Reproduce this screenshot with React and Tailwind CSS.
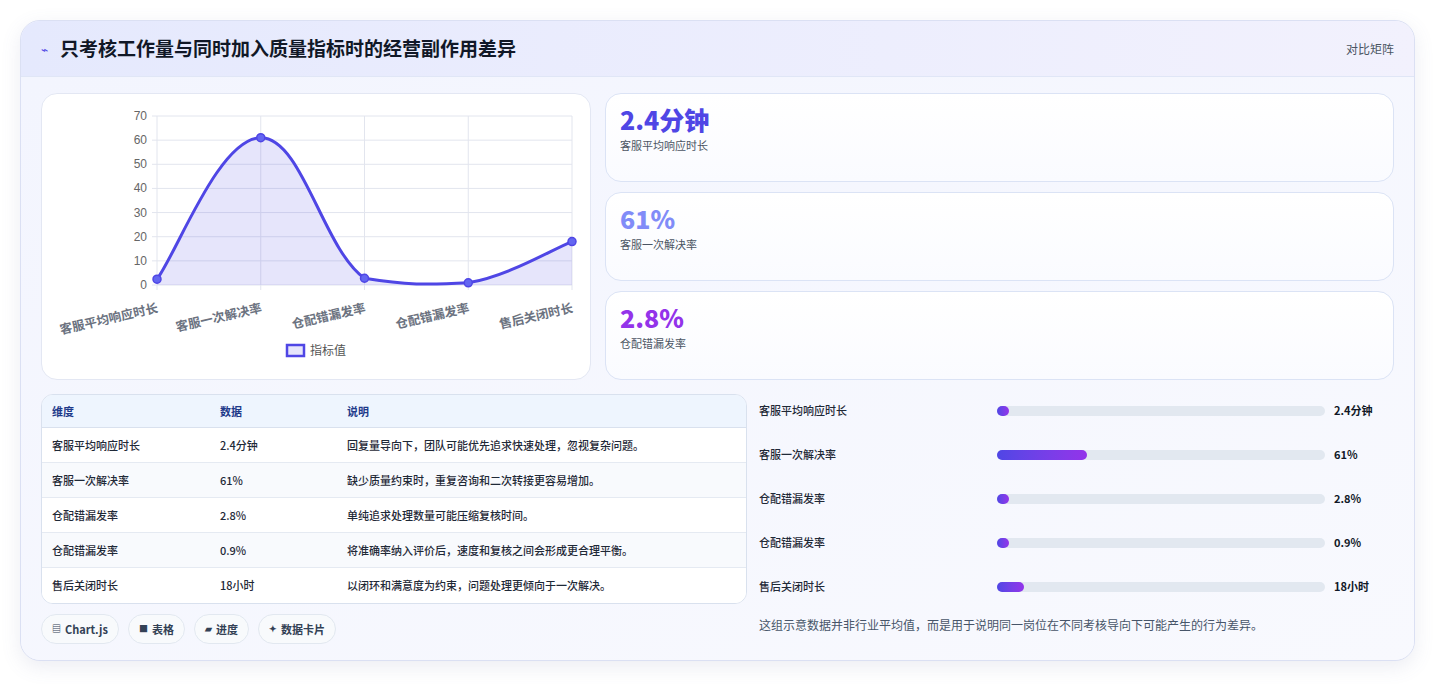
import React from 'react';

const font = { fontFamily: '"Noto Sans CJK SC", "Noto Sans", sans-serif' };

const points = [
  { label: '客服平均响应时长', value: 2.4 },
  { label: '客服一次解决率', value: 61 },
  { label: '仓配错漏发率', value: 2.8 },
  { label: '仓配错漏发率', value: 0.9 },
  { label: '售后关闭时长', value: 18 },
];

const rows = [
  ['客服平均响应时长', '2.4分钟', '回复量导向下，团队可能优先追求快速处理，忽视复杂问题。'],
  ['客服一次解决率', '61%', '缺少质量约束时，重复咨询和二次转接更容易增加。'],
  ['仓配错漏发率', '2.8%', '单纯追求处理数量可能压缩复核时间。'],
  ['仓配错漏发率', '0.9%', '将准确率纳入评价后，速度和复核之间会形成更合理平衡。'],
  ['售后关闭时长', '18小时', '以闭环和满意度为约束，问题处理更倾向于一次解决。'],
];

const bars = [
  { label: '客服平均响应时长', value: '2.4分钟', pct: 3.6 },
  { label: '客服一次解决率', value: '61%', pct: 27.5 },
  { label: '仓配错漏发率', value: '2.8%', pct: 3.6 },
  { label: '仓配错漏发率', value: '0.9%', pct: 3.6 },
  { label: '售后关闭时长', value: '18小时', pct: 8.2 },
];

const X0 = 115, X1 = 530, YT = 22, YB = 191;
const px = (i) => X0 + ((X1 - X0) / 4) * i;
const py = (v) => YB - ((YB - YT) / 70) * v;

function curvePath() {
  const p = points.map((d, i) => [px(i), py(d.value)]);
  let d = `M${p[0][0]},${p[0][1]}`;
  for (let i = 0; i < p.length - 1; i++) {
    const p0 = p[i - 1] || p[i];
    const p1 = p[i];
    const p2 = p[i + 1];
    const p3 = p[i + 2] || p2;
    const t = 0.4 / 2;
    const c1 = [p1[0] + (p2[0] - p0[0]) * t, Math.min(YB, p1[1] + (p2[1] - p0[1]) * t)];
    const c2 = [p2[0] - (p3[0] - p1[0]) * t, Math.min(YB, p2[1] - (p3[1] - p1[1]) * t)];
    d += ` C${c1[0]},${c1[1]} ${c2[0]},${c2[1]} ${p2[0]},${p2[1]}`;
  }
  return d;
}

const LineChart = () => {
  const line = curvePath();
  return (
    <svg width="549" height="285" className="block">
      {[0, 10, 20, 30, 40, 50, 60, 70].map((v) => (
        <g key={v}>
          <line x1={X0 - 5} x2={X1} y1={py(v)} y2={py(v)} stroke="#e2e5ee" />
          <text x={X0 - 10} y={py(v) + 4} textAnchor="end" fontSize="12" fill="#666" fontFamily="Liberation Sans, sans-serif">{v}</text>
        </g>
      ))}
      {points.map((d, i) => (
        <line key={i} x1={px(i)} x2={px(i)} y1={YT} y2={YB + 5} stroke="#e2e5ee" />
      ))}
      <path d={`${line} L${X1},${YB} L${X0},${YB} Z`} fill="rgba(79,70,229,0.14)" />
      <path d={line} fill="none" stroke="#4f46e5" strokeWidth="3" />
      {points.map((d, i) => (
        <circle key={i} cx={px(i)} cy={py(d.value)} r="4" fill="#6366f1" stroke="#4f46e5" strokeWidth="1.5" />
      ))}
      {points.map((d, i) => (
        <text key={i} x={px(i)} y={YB + 27} textAnchor="end" fontSize="12.5" fontWeight="600" fill="#6b7280"
          transform={`rotate(-13 ${px(i)} ${YB + 20})`} style={font}>{d.label}</text>
      ))}
      <rect x="245" y="251" width="17" height="11" fill="rgba(79,70,229,0.14)" stroke="#4f46e5" strokeWidth="2.5" />
      <text x="268" y="261" fontSize="12" fill="#555" style={font}>指标值</text>
    </svg>
  );
};

const StatCard = ({ value, label, color }) => (
  <div className="flex-1 rounded-2xl border border-[#dbe3f5] bg-gradient-to-b from-white to-[#fafbff] px-[14px] pt-[9px]">
    <div className={`text-[25px] font-extrabold leading-[32px] ${color}`}>{value}</div>
    <div className="mt-[2px] text-[11px] text-[#4b5563]">{label}</div>
  </div>
);

const Pill = ({ icon, children }) => (
  <div className="flex h-[30px] items-center gap-1 rounded-full border border-[#e2e8f0] bg-[#f8fafc] px-[10px] text-[11px] font-semibold text-[#334155]">
    <span className="text-[9px]">{icon}</span>
    {children}
  </div>
);

export default function App() {
  return (
    <div className="min-h-[684px] bg-white p-5" style={font}>
      <div className="overflow-hidden rounded-[20px] border border-[#dbe0f3] bg-[#f5f7fe] shadow-[0_6px_20px_rgba(100,110,160,0.12)]">
        <div className="flex h-[56px] items-center justify-between border-b border-[#e0e6f6] bg-gradient-to-r from-[#e5e9fd] to-[#f2f1fd] pl-5 pr-5">
          <div className="flex items-center gap-3">
            <span className="text-[12px] text-[#4f46e5]">⌁</span>
            <h1 className="text-[19px] font-bold text-[#111827]">只考核工作量与同时加入质量指标时的经营副作用差异</h1>
          </div>
          <span className="text-[12px] text-[#4b5563]">对比矩阵</span>
        </div>

        <div className="bg-gradient-to-br from-[#f3f5fe] to-[#f8f9fe] px-5 pt-4 pb-4">
          <div className="flex gap-[14px]">
            <div className="w-[550px] shrink-0 rounded-2xl border border-[#e3e7f3] bg-white">
              <LineChart />
            </div>
            <div className="flex h-[287px] flex-1 flex-col gap-[10px]">
              <StatCard value="2.4分钟" label="客服平均响应时长" color="text-[#4f46e5]" />
              <StatCard value="61%" label="客服一次解决率" color="text-[#818cf8]" />
              <StatCard value="2.8%" label="仓配错漏发率" color="text-[#9333ea]" />
            </div>
          </div>

          <div className="mt-[14px] flex gap-3">
            <div className="w-[706px] shrink-0">
              <div className="overflow-hidden rounded-xl border border-[#d9e1ee] bg-white text-[11px] font-medium">
                <div className="flex h-[33px] items-center border-b border-[#d9e1ee] bg-[#eef5fe] font-semibold text-[#1e3a8a]">
                  <div className="w-[178px] pl-[10px]">维度</div>
                  <div className="w-[127px]">数据</div>
                  <div>说明</div>
                </div>
                {rows.map((r, i) => (
                  <div key={i} className={`flex h-[35px] items-center text-[#1f2937] ${i < rows.length - 1 ? 'border-b border-[#e5eaf2]' : ''} ${i % 2 === 1 ? 'bg-[#f8fafd]' : 'bg-white'}`}>
                    <div className="w-[178px] pl-[10px]">{r[0]}</div>
                    <div className="w-[127px]">{r[1]}</div>
                    <div>{r[2]}</div>
                  </div>
                ))}
              </div>
              <div className="mt-[10px] flex gap-[9px]">
                <Pill icon="▤">Chart.js</Pill>
                <Pill icon="■">表格</Pill>
                <Pill icon="▰">进度</Pill>
                <Pill icon="✦">数据卡片</Pill>
              </div>
            </div>

            <div className="flex-1 pt-[8px]">
              {bars.map((b, i) => (
                <div key={i} className="flex h-[44px] items-start text-[11px]">
                  <div className="w-[238px] font-medium text-[#1f2937]">{b.label}</div>
                  <div className="mt-[4px] h-[10px] w-[328px] rounded-full bg-[#e2e8f0]">
                    <div className="h-full min-w-[12px] rounded-full bg-gradient-to-r from-[#4f46e5] to-[#9333ea]" style={{ width: `${b.pct}%` }} />
                  </div>
                  <div className="ml-[9px] font-bold text-[#111827]">{b.value}</div>
                </div>
              ))}
              <p className="-mt-[6px] text-[12px] text-[#475569]">这组示意数据并非行业平均值，而是用于说明同一岗位在不同考核导向下可能产生的行为差异。</p>
            </div>
          </div>
        </div>
      </div>
    </div>
  );
}
